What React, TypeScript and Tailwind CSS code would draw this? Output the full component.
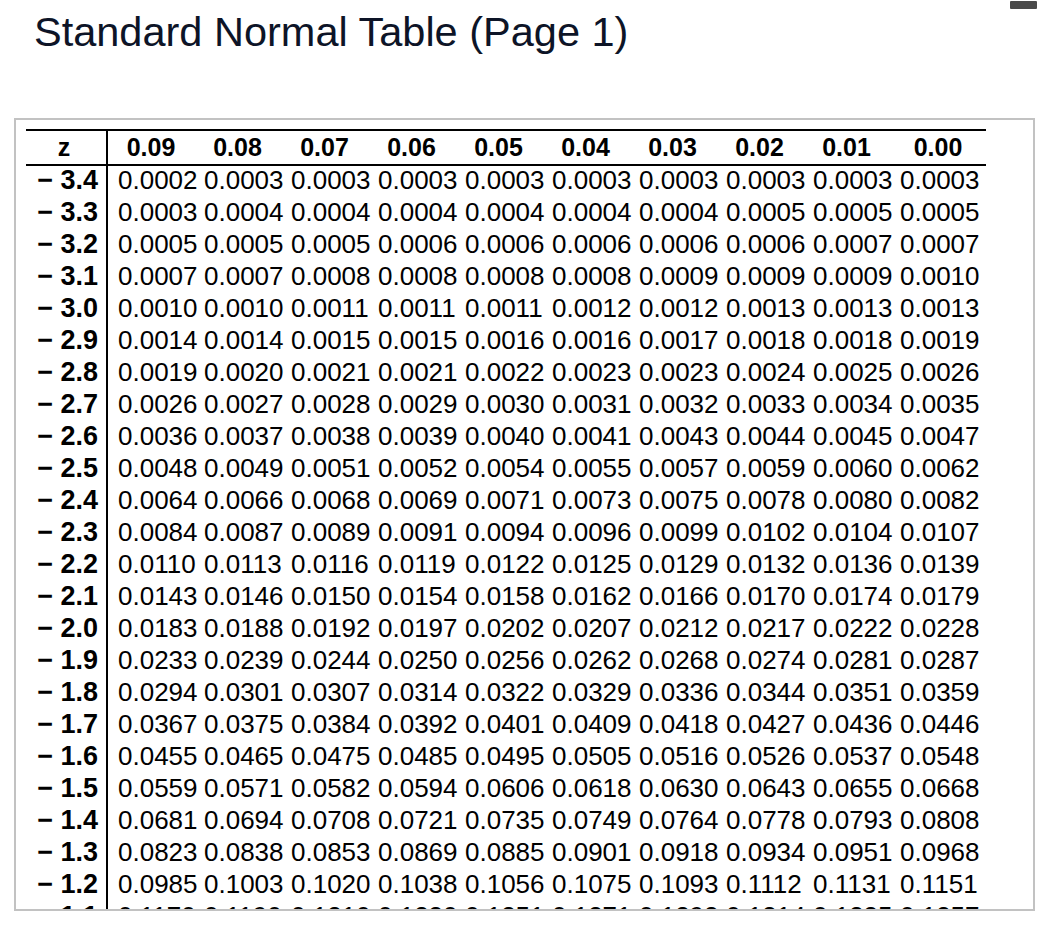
const headers = ['0.09', '0.08', '0.07', '0.06', '0.05', '0.04', '0.03', '0.02', '0.01', '0.00'];

const rows: [string, string][] = [
  ['3.4', '0.0002 0.0003 0.0003 0.0003 0.0003 0.0003 0.0003 0.0003 0.0003 0.0003'],
  ['3.3', '0.0003 0.0004 0.0004 0.0004 0.0004 0.0004 0.0004 0.0005 0.0005 0.0005'],
  ['3.2', '0.0005 0.0005 0.0005 0.0006 0.0006 0.0006 0.0006 0.0006 0.0007 0.0007'],
  ['3.1', '0.0007 0.0007 0.0008 0.0008 0.0008 0.0008 0.0009 0.0009 0.0009 0.0010'],
  ['3.0', '0.0010 0.0010 0.0011 0.0011 0.0011 0.0012 0.0012 0.0013 0.0013 0.0013'],
  ['2.9', '0.0014 0.0014 0.0015 0.0015 0.0016 0.0016 0.0017 0.0018 0.0018 0.0019'],
  ['2.8', '0.0019 0.0020 0.0021 0.0021 0.0022 0.0023 0.0023 0.0024 0.0025 0.0026'],
  ['2.7', '0.0026 0.0027 0.0028 0.0029 0.0030 0.0031 0.0032 0.0033 0.0034 0.0035'],
  ['2.6', '0.0036 0.0037 0.0038 0.0039 0.0040 0.0041 0.0043 0.0044 0.0045 0.0047'],
  ['2.5', '0.0048 0.0049 0.0051 0.0052 0.0054 0.0055 0.0057 0.0059 0.0060 0.0062'],
  ['2.4', '0.0064 0.0066 0.0068 0.0069 0.0071 0.0073 0.0075 0.0078 0.0080 0.0082'],
  ['2.3', '0.0084 0.0087 0.0089 0.0091 0.0094 0.0096 0.0099 0.0102 0.0104 0.0107'],
  ['2.2', '0.0110 0.0113 0.0116 0.0119 0.0122 0.0125 0.0129 0.0132 0.0136 0.0139'],
  ['2.1', '0.0143 0.0146 0.0150 0.0154 0.0158 0.0162 0.0166 0.0170 0.0174 0.0179'],
  ['2.0', '0.0183 0.0188 0.0192 0.0197 0.0202 0.0207 0.0212 0.0217 0.0222 0.0228'],
  ['1.9', '0.0233 0.0239 0.0244 0.0250 0.0256 0.0262 0.0268 0.0274 0.0281 0.0287'],
  ['1.8', '0.0294 0.0301 0.0307 0.0314 0.0322 0.0329 0.0336 0.0344 0.0351 0.0359'],
  ['1.7', '0.0367 0.0375 0.0384 0.0392 0.0401 0.0409 0.0418 0.0427 0.0436 0.0446'],
  ['1.6', '0.0455 0.0465 0.0475 0.0485 0.0495 0.0505 0.0516 0.0526 0.0537 0.0548'],
  ['1.5', '0.0559 0.0571 0.0582 0.0594 0.0606 0.0618 0.0630 0.0643 0.0655 0.0668'],
  ['1.4', '0.0681 0.0694 0.0708 0.0721 0.0735 0.0749 0.0764 0.0778 0.0793 0.0808'],
  ['1.3', '0.0823 0.0838 0.0853 0.0869 0.0885 0.0901 0.0918 0.0934 0.0951 0.0968'],
  ['1.2', '0.0985 0.1003 0.1020 0.1038 0.1056 0.1075 0.1093 0.1112 0.1131 0.1151'],
  ['1.1', '0.1170 0.1190 0.1210 0.1230 0.1251 0.1271 0.1292 0.1314 0.1335 0.1357'],
];

export default function App() {
  return (
    <div className="relative w-[1054px] h-[942px] overflow-hidden bg-white font-['Liberation_Sans',Arial,sans-serif] text-black">
      {/* scroll handle */}
      <div className="absolute right-[17px] top-[1px] w-[27px] h-[8px] rounded-[1px] bg-[#4a4a4a]" />

      <h1 className="pl-[34px] pt-[9px] text-[41.5px] leading-[46px] text-[#0d1427]">
        Standard Normal Table (Page 1)
      </h1>

      <div className="mt-[63px] ml-[14px] w-[1021px] h-[793px] overflow-hidden border-2 border-[#c2c2c2] pt-[9px] pl-[10px]">
        <table className="table-fixed border-collapse w-[960px]">
          <colgroup>
            <col className="w-[81px]" />
            {headers.slice(0, 9).map((h) => (
              <col key={h} className="w-[87px]" />
            ))}
            <col className="w-[96px]" />
          </colgroup>
          <thead>
            <tr className="border-y-2 border-black h-[35px]">
              <th className="border-r-2 border-black pr-[4px] text-[25px] font-bold leading-[31px] text-center">z</th>
              {headers.map((h) => (
                <th key={h} className="text-[25px] font-bold leading-[31px] text-center">
                  {h}
                </th>
              ))}
            </tr>
          </thead>
          <tbody>
            {rows.map(([z, vals]) => (
              <tr key={z} className="h-[32px]">
                <td className="border-r-2 border-black pr-[8px] pb-[3px] align-top text-right text-[27px] font-bold leading-[29px] whitespace-nowrap">
                  − {z}
                </td>
                {vals.split(' ').map((v, i) => (
                  <td key={i} className="pl-[10px] pb-[3px] align-top text-left text-[26px] leading-[29px] whitespace-nowrap">
                    {v}
                  </td>
                ))}
              </tr>
            ))}
          </tbody>
        </table>
      </div>
    </div>
  );
}
